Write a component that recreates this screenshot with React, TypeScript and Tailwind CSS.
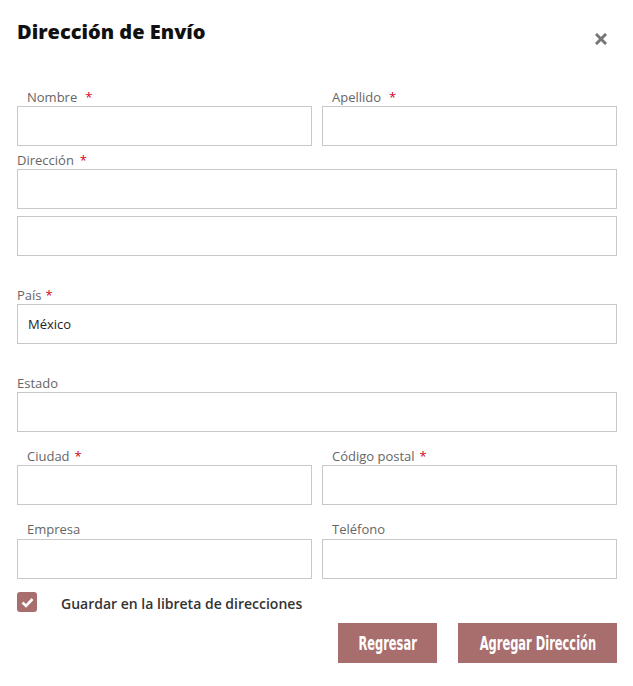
import React from 'react';

const font = { fontFamily: '"Open Sans", "Liberation Sans", sans-serif' };
const btnFont = { fontFamily: '"DejaVu Sans Condensed", "Liberation Sans Narrow", sans-serif', fontStretch: 'condensed' };

function Label({ text, req, indent, gap = 'ml-[4px]' }: { text: string; req?: boolean; indent?: boolean; gap?: string }) {
  return (
    <div className={`h-[18px] text-[13px] leading-[18px] text-[#666] ${indent ? 'pl-[10px]' : ''}`}>
      {text}
      {req && <span className={`text-[#d0021b] ${gap}`}>*</span>}
    </div>
  );
}

function Input({ value }: { value?: string }) {
  return (
    <div className="h-[40px] w-full border border-[#c8c8c8] bg-white px-[10px] text-[13px] leading-[38px] text-[#222]">
      {value}
    </div>
  );
}

export default function App() {
  return (
    <div className="min-h-screen bg-white" style={font}>
      <div className="w-[633px] pl-[17px] pr-[16px] pt-[18px]">
        {/* header */}
        <div className="flex items-start justify-between">
          <h1 className="text-[20px] font-extrabold leading-[28px] text-[#111]">Dirección de Envío</h1>
          <button className="mr-[10px] mt-[15px] text-[#777]">
            <svg width="12" height="12" viewBox="0 0 12 12">
              <path d="M2 2 L10 10 M10 2 L2 10" stroke="currentColor" strokeWidth="3" strokeLinecap="square" />
            </svg>
          </button>
        </div>

        <div className="mt-[42px] grid grid-cols-2 gap-x-[10px]">
          <div>
            <Label text="Nombre" req indent gap="ml-[8px]" />
            <Input />
          </div>
          <div>
            <Label text="Apellido" req indent gap="ml-[8px]" />
            <Input />
          </div>
        </div>

        <div className="mt-[5px]">
          <Label text="Dirección" req gap="ml-[6px]" />
          <Input />
          <div className="mt-[7px]">
            <Input />
          </div>
        </div>

        <div className="mt-[30px]">
          <Label text="País" req />
          <Input value="México" />
        </div>

        <div className="mt-[30px]">
          <Label text="Estado" />
          <Input />
        </div>

        <div className="mt-[15px] grid grid-cols-2 gap-x-[10px]">
          <div>
            <Label text="Ciudad" req indent gap="ml-[5px]" />
            <Input />
          </div>
          <div>
            <Label text="Código postal" req indent gap="ml-[5px]" />
            <Input />
          </div>
        </div>

        <div className="mt-[15px] grid grid-cols-2 gap-x-[10px]">
          <div>
            <div className="h-[19px]">
              <Label text="Empresa" indent />
            </div>
            <Input />
          </div>
          <div>
            <div className="h-[19px]">
              <Label text="Teléfono" indent />
            </div>
            <Input />
          </div>
        </div>

        <label className="mt-[13px] flex h-[20px] items-center">
          <span className="flex h-[20px] w-[20px] items-center justify-center rounded-[3px] bg-[#a86e6d]">
            <svg width="13" height="11" viewBox="0 0 13 11">
              <path d="M1.5 5.5 L5 9 L11.5 2" fill="none" stroke="white" strokeWidth="2.6" />
            </svg>
          </span>
          <span className="ml-[24px] translate-y-[2px] text-[14px] font-semibold leading-[20px] text-[#333]">
            Guardar en la libreta de direcciones
          </span>
        </label>

        <div className="mt-[11px] flex justify-end gap-[21px]">
          <button className="flex h-[40px] w-[99px] items-center justify-center bg-[#a86e6d] text-white">
            <span className="inline-block scale-x-[0.67] text-[19px] font-bold" style={btnFont}>
              Regresar
            </span>
          </button>
          <button className="flex h-[40px] w-[159px] items-center justify-center bg-[#a86e6d] text-white">
            <span className="inline-block scale-x-[0.67] whitespace-nowrap text-[19px] font-bold" style={btnFont}>
              Agregar Dirección
            </span>
          </button>
        </div>
      </div>
    </div>
  );
}
